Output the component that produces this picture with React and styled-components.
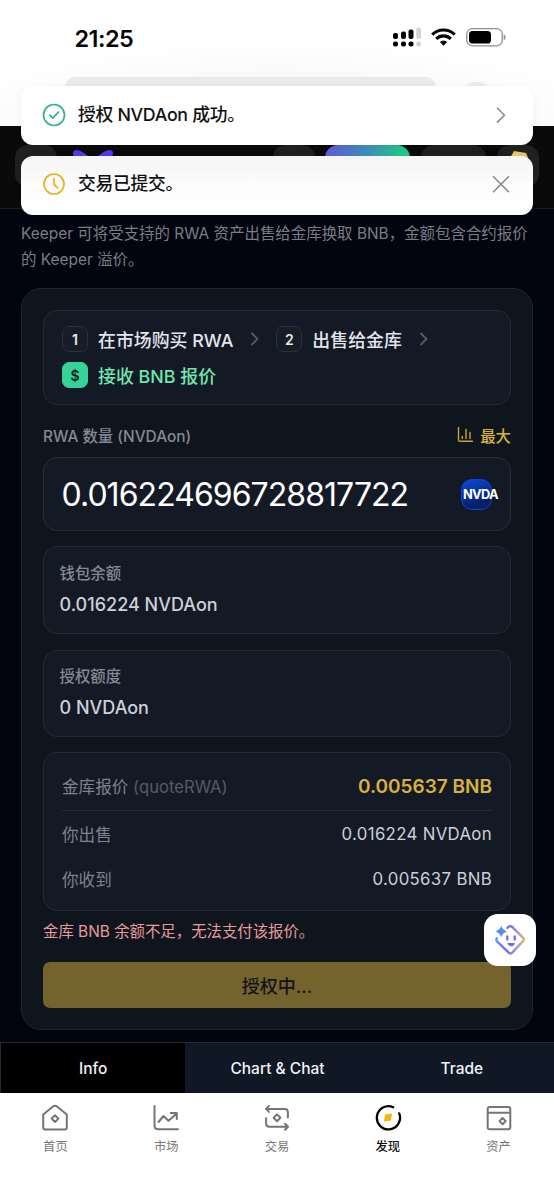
import styled, { createGlobalStyle } from "styled-components"

const GlobalStyle=createGlobalStyle`
  *{
    box-sizing: border-box;
  }
  body{
    margin: 0;
    background-color: #fff;
    font-family: Inter, "Noto Sans CJK SC", sans-serif;
  }
  svg{
    display: block;
    flex: none;
  }
`
const Screen=styled.div`
  position: relative;
  width: 554px;
  height: 1200px;
  display: flex;
  flex-direction: column;
  overflow: hidden;
`

/* 顶部状态栏 */
const BrowserTop=styled.header`
  height: 126px;
  display: flex;
  flex-direction: column;
  background: radial-gradient(ellipse 64% 72% at 50% 104%, #f5f5f5 20%, #fafafa 65%, #fff 100%);
`
const StatusBar=styled.div`
  height: 77px;
  display: flex;
  align-items: center;
  justify-content: space-between;
  padding: 0 48px 3px 74.5px;
`
const Time=styled.span`
  padding-top: 2px;
  font-size: 23.4px;
  font-weight: 600;
  letter-spacing: -0.5px;
  color: #050505;
`
const StatusIcons=styled.div`
  display: flex;
  align-items: center;
  gap: 10px;
`
const AddressRow=styled.div`
  display: flex;
  gap: 27px;
  padding-left: 65px;
`
const AddressBar=styled.div`
  width: 371px;
  height: 40px;
  border-radius: 10px;
  background-color: #eaeaea;
`
const Avatar=styled.div`
  width: 28px;
  height: 28px;
  margin-top: 5px;
  border-radius: 12px;
  background-color: #ebeaf5;
`

/* DApp 头部 */
const DappHeader=styled.div`
  height: 83px;
  display: flex;
  align-items: flex-start;
  padding: 19px 15px 0;
  background-color: #0a0a0a;
  border-bottom: 1px solid #1c1c1f;
`
const Chip=styled.div`
  width: ${({$w}) => $w}px;
  height: 42px;
  margin-left: ${({$ml}) => $ml || 0}px;
  padding: ${({$pad}) => $pad || 0};
  border-radius: 13px;
  background: ${({$accent}) => $accent ? 'linear-gradient(90deg, #6558d8, #3c8fb6 50%, #22c58c 90%)' : '#202020'};
`
const LogoMark=styled.svg`
  margin: 4px 0 0 15px;
`

/* 提示 */
const Toasts=styled.div`
  position: absolute;
  top: 86px;
  left: 21px;
  width: 512px;
  display: flex;
  flex-direction: column;
  gap: 10.5px;
`
const ToastBox=styled.div`
  height: 59px;
  display: flex;
  align-items: center;
  padding: 0 20px 2px;
  border-radius: 12px;
  background: ${({$faded}) => $faded ? 'linear-gradient(#f4f4f4, #fdfdfd 55%, #fff)' : '#fff'};
  box-shadow: 0 2px 8px rgba(0, 0, 0, 0.05);
  p{
    flex: 1;
    margin: 0 0 0 11px;
    font-size: 17.8px;
    font-weight: 500;
    line-height: 26px;
    letter-spacing: -0.3px;
    color: #111;
  }
`

/* 内容 */
const Content=styled.main`
  height: 833px;
  padding: 12px 21px 0;
  background-color: #02040f;
`
const Intro=styled.p`
  margin: 0 -10px 15px 0;
  font-size: 15.44px;
  line-height: 26px;
  color: #7b7d84;
`
const Card=styled.section`
  height: 742px;
  display: flex;
  flex-direction: column;
  padding: 21px;
  border: 1px solid #20262f;
  border-radius: 20px;
  background-color: #0f151d;
`
const Panel=styled.div`
  border: 1px solid #232a34;
  border-radius: 14px;
  background-color: #141a25;
`
const Steps=styled(Panel)`
  height: 95px;
  display: flex;
  flex-wrap: wrap;
  align-content: flex-start;
  padding: 15px 18px;
  row-gap: 10px;
`
const Step=styled.div`
  display: flex;
  align-items: center;
  height: 26px;
  font-size: 17.9px;
  font-weight: 500;
  white-space: nowrap;
  color: ${({$active}) => $active ? '#6ee7b0' : '#e3e5ec'};
  span{
    margin-left: 10px;
  }
  svg{
    margin: 0 16px 0 17px;
  }
`
const StepBadge=styled.b`
  width: 26px;
  height: 26px;
  display: flex;
  align-items: center;
  justify-content: center;
  border: 1px solid ${({$active}) => $active ? '#34d399' : '#2a313c'};
  border-radius: 7px;
  background-color: ${({$active}) => $active ? '#34d399' : '#161d27'};
  font-size: 14px;
  font-weight: 600;
  color: ${({$active}) => $active ? '#10201d' : '#e8eaf0'};
`
const FieldHead=styled.div`
  height: 52px;
  display: flex;
  align-items: center;
  justify-content: space-between;
  padding-top: 7px;
  font-size: 15.4px;
  font-weight: 500;
  color: #858995;
`
const MaxButton=styled.button`
  display: flex;
  align-items: center;
  gap: 6px;
  padding: 0;
  border: none;
  background: none;
  font-family: inherit;
  font-size: 15.4px;
  font-weight: 500;
  color: #d8b03c;
`
const AmountBox=styled(Panel)`
  height: 74px;
  display: flex;
  align-items: center;
  justify-content: space-between;
  padding: 0 18px 0 17.5px;
  border-color: #262d36;
  font-size: 32px;
  letter-spacing: -0.95px;
  color: #fff;
`
const TokenLogo=styled.div`
  width: 31px;
  height: 31px;
  display: flex;
  align-items: center;
  padding-left: 1px;
  border: 1px solid #0b47d0;
  border-radius: 11px;
  background: linear-gradient(160deg, #0a4be0, #061f66 75%);
  font-size: 12.8px;
  font-weight: 700;
  letter-spacing: -0.7px;
`
const InfoBox=styled(Panel)`
  height: 87.5px;
  margin-top: ${({$mt}) => $mt}px;
  padding: 13.5px 15.5px;
  font-weight: 500;
  h4{
    margin: 0;
    font-size: 15.4px;
    font-weight: 500;
    line-height: 26px;
    color: #858995;
  }
  p{
    margin: 4px 0 0;
    font-size: 18px;
    line-height: 28px;
    color: #cdd0d8;
  }
`
const QuoteBox=styled(Panel)`
  height: 159px;
  margin-top: 15px;
  padding: 9px 18px;
`
const QuoteRow=styled.div`
  height: ${({$main}) => $main ? 49 : 45}px;
  display: flex;
  align-items: center;
  justify-content: space-between;
  border-bottom: ${({$main}) => $main ? '1px solid #232a34' : 'none'};
  font-size: 16.6px;
  color: #7d828c;
  small{
    font-size: 16.6px;
    color: #555b66;
  }
  strong{
    font-size: ${({$main}) => $main ? 19 : 16.8}px;
    font-weight: ${({$main}) => $main ? 600 : 400};
    letter-spacing: ${({$main}) => $main ? 0 : 0.33}px;
    color: ${({$main}) => $main ? '#d9b13d' : '#cdd0d8'};
  }
`
const ErrorText=styled.p`
  margin: 6.5px 0 16.5px;
  font-size: 15.4px;
  line-height: 28px;
  color: #e79a9f;
`
const SubmitButton=styled.button`
  height: 46px;
  border: none;
  border-radius: 7px;
  background-color: #75632e;
  font-family: inherit;
  font-size: 18px;
  font-weight: 500;
  color: #111318;
`

const FloatButton=styled.button`
  position: absolute;
  left: 484px;
  top: 914px;
  width: 52px;
  height: 52px;
  display: flex;
  align-items: center;
  justify-content: center;
  padding: 0;
  border: none;
  border-radius: 14px;
  background-color: #fff;
`

/* 底部 */
const Tabs=styled.div`
  height: 51px;
  display: flex;
  border-top: 1px solid #232a36;
  border-left: 1px solid #232a36;
  background-color: #101725;
`
const Tab=styled.div`
  flex: 1;
  display: flex;
  align-items: center;
  justify-content: center;
  background-color: ${({$active}) => $active ? '#000' : 'transparent'};
  font-size: 15.5px;
  font-weight: 500;
  color: #f2f3f5;
`
const BottomNav=styled.nav`
  height: 107px;
  display: flex;
  background-color: #fff;
`
const NavItem=styled.a`
  flex: 1;
  display: flex;
  flex-direction: column;
  align-items: center;
  padding-top: 11px;
  font-size: 12.3px;
  line-height: 20px;
  font-weight: ${({$active}) => $active ? 500 : 400};
  color: ${({$active}) => $active ? '#111' : '#777'};
  svg{
    margin-bottom: 5px;
  }
`

function SignalIcon(){
  return <svg width="28" height="20" viewBox="0 0 28 20">
    <g fill="#050505">
      <rect x="0" y="6" width="5" height="6" rx="2"/>
      <rect x="8" y="4.5" width="5" height="7.5" rx="2"/>
      <rect x="15.5" y="2.5" width="5" height="9.5" rx="2"/>
      <rect x="0" y="14.5" width="5" height="5" rx="2"/>
      <rect x="8" y="14.5" width="5" height="5" rx="2"/>
      <rect x="15.5" y="14.5" width="5" height="5" rx="2"/>
    </g>
    <g fill="#d2d2d2">
      <rect x="23.3" y="0.5" width="4.7" height="11.5" rx="2"/>
      <rect x="23.3" y="14.5" width="4.7" height="5" rx="2"/>
    </g>
  </svg>
}

function WifiIcon(){
  return <svg width="25" height="18" viewBox="0 0 25 18" fill="none" stroke="#050505" strokeWidth="3.1">
    <path d="M1.2 6.6A16 16 0 0 1 23.8 6.6"/>
    <path d="M5.2 10.9A10.3 10.3 0 0 1 19.8 10.9"/>
    <path d="M12.5 17.8 8.8 14.1A5.3 5.3 0 0 1 16.2 14.1Z" fill="#050505" stroke="none"/>
  </svg>
}

function BatteryIcon(){
  return <svg width="40" height="19" viewBox="0 0 40 19">
    <rect x="0.7" y="0.7" width="35.6" height="17.1" rx="5.6" fill="none" stroke="#919191" strokeWidth="1.3"/>
    <rect x="3" y="3" width="22" height="12.5" rx="3.6" fill="#000"/>
    <path d="M37.7 6.3c2.4 1 2.4 5 0 6z" fill="#919191"/>
  </svg>
}

function Chevron(){
  return <svg width="10" height="14" viewBox="0 0 10 14" fill="none" stroke="#555b67" strokeWidth="1.8" strokeLinecap="round" strokeLinejoin="round">
    <path d="M2 1.5 7.5 7 2 12.5"/>
  </svg>
}

function MaxIcon(){
  return <svg width="17" height="17" viewBox="0 0 17 17" fill="none" stroke="#c9a43a" strokeWidth="1.4" strokeLinecap="round">
    <path d="M1.5 1.5v12.5q0 1.3 1.3 1.3H15.5M5.3 12.5v-2M9 12.5v-9M13 12.5v-6"/>
  </svg>
}

function RobotIcon(){
  return <svg width="32" height="32" viewBox="0 0 32 32" fill="none">
    <defs>
      <linearGradient id="bot" x1="2" y1="12" x2="31" y2="16" gradientUnits="userSpaceOnUse">
        <stop offset="0" stopColor="#5b9df5"/>
        <stop offset="0.45" stopColor="#7668ee"/>
        <stop offset="0.8" stopColor="#b39be0"/>
        <stop offset="1" stopColor="#eeb52f"/>
      </linearGradient>
    </defs>
    <path d="M13.5 3.7 15 2.6q1.7-1.1 3.3.4L29 13.7q1.7 1.8 0 3.5L18.5 28.4q-2 2-4 0L3.2 17.6Q1.7 16 2.8 14.3" stroke="url(#bot)" strokeWidth="2.4" strokeLinecap="round"/>
    <path d="M7.2 1.8Q8.6 6.1 12.9 7.5 8.6 8.9 7.2 13.2 5.8 8.9 1.5 7.5 5.8 6.1 7.2 1.8Z" fill="#4d8ff3"/>
    <path d="M13.3 12.5v3M20.7 12.5v3" stroke="#6f67ec" strokeWidth="2.3" strokeLinecap="round"/>
    <path d="M13.3 18.9h7.6q-1 3.4-3.8 3.4t-3.8-3.4Z" fill="#6f67ec"/>
  </svg>
}

const navIcons={
  home: <path d="M2.2 10.4 12 2.4Q14 .9 16 2.4l9.8 8v13q0 2-2 2H4.2q-2 0-2-2Z M14 11.2l3.4 3.4L14 18l-3.4-3.4Z"/>,
  market: <path d="M2.5 2v19.5q0 3.7 3.7 3.7H26M6.5 18l5-6 5 4.8 8.3-7.3M18.8 9h6v6"/>,
  trade: <path d="M6 1.9 3 4.9l3 3M3.4 4.9H21.5q3.4 0 3.4 3.4v5.2M22 19.8l3 3-3 3M24.6 22.8H6.5q-3.4 0-3.4-3.4v-5.2M14 10.4l3.4 3.4-3.4 3.4-3.4-3.4Z"/>,
  asset: <path d="M4.7 3h18.6q2 0 2 2v18.2q0 2-2 2H4.7q-2 0-2-2V5q0-2 2-2ZM2.7 8.7h22.6M17.6 14l3.1 3.1-3.1 3.1-3.1-3.1Z"/>,
}

function NavIcon({name}){
  if (name === 'discover') {
    return <svg width="28" height="28" viewBox="0 0 28 28" fill="none">
      <path d="M25.2 9.4A11.6 11.6 0 1 1 19.2 3.2" stroke="#050505" strokeWidth="2.3" strokeLinecap="round"/>
      <path d="M11 10.4 18.2 9.6l-1.5 7.2-6.7.8Z" fill="#ecb90f"/>
    </svg>
  }
  return <svg width="28" height="28" viewBox="0 0 28 28" fill="none" stroke="#757575" strokeWidth="2" strokeLinecap="round" strokeLinejoin="round">
    {navIcons[name]}
  </svg>
}

const navs=[
  { name: 'home', label: '首页' },
  { name: 'market', label: '市场' },
  { name: 'trade', label: '交易' },
  { name: 'discover', label: '发现' },
  { name: 'asset', label: '资产' },
]

export default function App(){
  return<>
    <GlobalStyle />
    <Screen>
      <BrowserTop>
        <StatusBar>
          <Time>21:25</Time>
          <StatusIcons>
            <SignalIcon />
            <WifiIcon />
            <BatteryIcon />
          </StatusIcons>
        </StatusBar>
        <AddressRow>
          <AddressBar />
          <Avatar />
        </AddressRow>
      </BrowserTop>
      <DappHeader>
        <Chip $w={42} />
        <LogoMark width="42" height="30" viewBox="0 0 42 30">
          <path d="M1 4q0-3 4-3 5 0 16 11Q32 1 37 1q4 0 4 3 0 9-13 20H14Q1 13 1 4Z" fill="#5b35f0"/>
        </LogoMark>
        <Chip $w={42} $ml={159} />
        <Chip $w={86} $ml={10} $accent />
        <Chip $w={65} $ml={11} />
        <Chip $w={42} $ml={11} $pad="6px 12px">
          <svg width="20" height="20" viewBox="0 0 20 20">
            <path d="M5 0 17 2 20 9 16 19H2L0 9Z" fill="#e9c46f"/>
          </svg>
        </Chip>
      </DappHeader>
      <Content>
        <Intro>Keeper 可将受支持的 RWA 资产出售给金库换取 BNB，金额包含合约报价<br/>的 Keeper 溢价。</Intro>
        <Card>
          <Steps>
            <Step><StepBadge>1</StepBadge><span>在市场购买 RWA</span><Chevron /></Step>
            <Step><StepBadge>2</StepBadge><span>出售给金库</span><Chevron /></Step>
            <Step $active><StepBadge $active>$</StepBadge><span>接收 BNB 报价</span></Step>
          </Steps>
          <FieldHead>
            <span>RWA 数量 (NVDAon)</span>
            <MaxButton><MaxIcon />最大</MaxButton>
          </FieldHead>
          <AmountBox>
            <span>0.016224696728817722</span>
            <TokenLogo>NVDA</TokenLogo>
          </AmountBox>
          <InfoBox $mt={15}>
            <h4>钱包余额</h4>
            <p>0.016224 NVDAon</p>
          </InfoBox>
          <InfoBox $mt={16}>
            <h4>授权额度</h4>
            <p>0 NVDAon</p>
          </InfoBox>
          <QuoteBox>
            <QuoteRow $main>
              <span>金库报价 <small>(quoteRWA)</small></span>
              <strong>0.005637 BNB</strong>
            </QuoteRow>
            <QuoteRow>
              <span>你出售</span>
              <strong>0.016224 NVDAon</strong>
            </QuoteRow>
            <QuoteRow>
              <span>你收到</span>
              <strong>0.005637 BNB</strong>
            </QuoteRow>
          </QuoteBox>
          <ErrorText>金库 BNB 余额不足，无法支付该报价。</ErrorText>
          <SubmitButton>授权中...</SubmitButton>
        </Card>
      </Content>
      <Tabs>
        <Tab $active>Info</Tab>
        <Tab>Chart &amp; Chat</Tab>
        <Tab>Trade</Tab>
      </Tabs>
      <BottomNav>
        {navs.map(({name, label}) => (
          <NavItem key={name} $active={name === 'discover'}>
            <NavIcon name={name} />
            {label}
          </NavItem>
        ))}
      </BottomNav>
      <Toasts>
        <ToastBox>
          <svg width="26" height="26" viewBox="0 0 26 26" fill="none" stroke="#32b482" strokeWidth="1.7" strokeLinecap="round" strokeLinejoin="round">
            <circle cx="13" cy="13" r="10.5"/>
            <path d="m8.8 13.2 3 3 5.6-6"/>
          </svg>
          <p>授权 NVDAon 成功。</p>
          <svg width="24" height="24" viewBox="0 0 24 24" fill="none" stroke="#8a8a8a" strokeWidth="1.6" strokeLinecap="round" strokeLinejoin="round">
            <path d="m8.5 5.3 7 6.9-7 6.9"/>
          </svg>
        </ToastBox>
        <ToastBox $faded>
          <svg width="26" height="26" viewBox="0 0 26 26" fill="none" stroke="#e8b21c" strokeWidth="1.7" strokeLinecap="round" strokeLinejoin="round">
            <circle cx="13" cy="13" r="10"/>
            <path d="M13 7.5v6l3.7 3.3"/>
          </svg>
          <p>交易已提交。</p>
          <svg width="24" height="24" viewBox="0 0 24 24" fill="none" stroke="#8a8a8a" strokeWidth="1.6" strokeLinecap="round">
            <path d="m4.5 4.8 15 15M19.5 4.8l-15 15"/>
          </svg>
        </ToastBox>
      </Toasts>
      <FloatButton><RobotIcon /></FloatButton>
    </Screen>
  </>
}
